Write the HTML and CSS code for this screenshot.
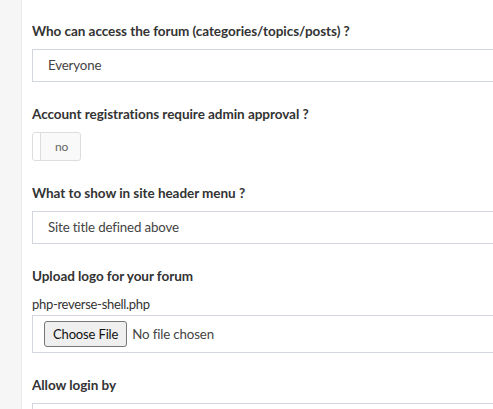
FILE: index.html
```html
<!DOCTYPE html>
<html>
<head>
<meta charset="utf-8">
<link rel="stylesheet" href="styles.css">
</head>
<body>
<div class="layout">
  <aside class="sidebar"></aside>
  <main class="main">
    <div class="field">
      <label class="label">Who can access the forum (categories/topics/posts) ?</label>
      <div class="select">Everyone</div>
    </div>
    <div class="field">
      <label class="label">Account registrations require admin approval ?</label>
      <div class="toggle"><span class="knob"></span><span class="toggle-text">no</span></div>
    </div>
    <div class="field">
      <label class="label">What to show in site header menu ?</label>
      <div class="select">Site title defined above</div>
    </div>
    <div class="field">
      <label class="label">Upload logo for your forum</label>
      <div class="filename">php-reverse-shell.php</div>
      <div class="filebox"><span class="file-btn">Choose File</span><span class="file-text">No file chosen</span></div>
    </div>
    <div class="field">
      <label class="label">Allow login by</label>
      <div class="select"></div>
    </div>
  </main>
</div>
</body>
</html>
```
FILE: styles.css
```css
html, body {
  margin: 0;
  padding: 0;
  background: #fff;
  overflow: hidden;
  height: 409px;
}
body {
  font-family: "Source Sans Pro", Lato, "Open Sans", sans-serif;
  font-size: 13px;
  letter-spacing: -0.15px;
  color: #333;
}
.layout {
  display: flex;
  height: 409px;
  overflow: hidden;
}
.sidebar {
  width: 21px;
  flex: none;
  background: #f6f6f6;
  border-right: 1px solid #ececec;
}
.main {
  padding: 21px 0 0 10px;
  display: flex;
  flex-direction: column;
  gap: 22px;
}
.field {
  display: flex;
  flex-direction: column;
}
.label {
  font-weight: 700;
  font-size: 13.5px;
  letter-spacing: -0.05px;
  line-height: 20px;
  margin-bottom: 8px;
  color: #333;
}
.select {
  width: 480px;
  height: 33px;
  box-sizing: border-box;
  border: 1px solid #d2d6de;
  padding: 0 15px;
  line-height: 31px;
  font-size: 13.3px;
  color: #444;
}
.toggle {
  width: 49px;
  height: 29px;
  box-sizing: border-box;
  border: 1px solid #ddd;
  border-radius: 3px;
  background: #f9f9f9;
  display: flex;
  align-items: stretch;
}
.knob {
  width: 7px;
  border-right: 1px solid #ddd;
  background: #fff;
  border-radius: 3px 0 0 3px;
}
.toggle-text {
  flex: 1;
  text-align: center;
  line-height: 27px;
  font-size: 12px;
  color: #666;
  padding-left: 2px;
}
.filename {
  line-height: 20px;
  margin-bottom: 1px;
  letter-spacing: -0.3px;
  color: #333;
}
.filebox {
  width: 480px;
  height: 38px;
  box-sizing: border-box;
  border: 1px solid #d2d6de;
  padding: 5px 11px;
  display: flex;
  align-items: center;
  gap: 5px;
}
.file-btn {
  height: 26px;
  box-sizing: border-box;
  padding: 0 8px;
  border: 1px solid #767676;
  border-radius: 3px;
  background: #efefef;
  line-height: 24px;
  color: #111;
}
.file-text {
  font-size: 13.3px;
  color: #444;
}
```
